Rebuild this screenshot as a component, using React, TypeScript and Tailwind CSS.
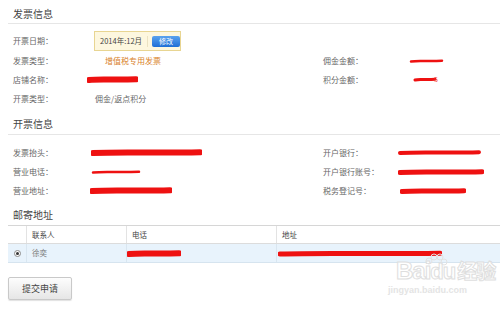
import { FC, ReactNode } from "react";

const Scribble: FC<{ w: number; h: number; t: number; dx?: number }> = ({ w, h, t, dx = 0 }) => {
  const y = h / 2 + 2;
  return (
    <svg width={w + 4} height={h + 4} className="block shrink-0" style={{ marginLeft: dx }}>
      <path
        d={`M2 ${y + 0.5} C ${w * 0.3} ${y - 0.8}, ${w * 0.6} ${y + 0.8}, ${w + 2} ${y - 0.3}`}
        stroke="#ee1111"
        strokeWidth={t}
        strokeLinecap="round"
        fill="none"
      />
    </svg>
  );
};

const Label: FC<{ children: ReactNode }> = ({ children }) => (
  <div className="text-[8px] text-[#666] whitespace-nowrap">{children}</div>
);

const App: FC = () => {
  return (
    <div className="relative w-[500px] h-[311px] overflow-hidden bg-white font-['Noto_Sans_CJK_SC','Noto_Sans',sans-serif]">
      <div className="h-[24px] border-b border-[#e6e6e6] ml-[8px] pl-[5px] pt-[7px] text-[10px] leading-[14px] text-[#444]">
        发票信息
      </div>

      <div className="mt-[7px] pl-[13px] grid grid-cols-[81px_229px_87px_1fr]">
        <div className="h-[20px] flex items-center"><Label>开票日期：</Label></div>
        <div className="h-[20px] flex items-center">
          <div className="w-[87px] h-[20px] shrink-0 flex items-center bg-[#fdf7df] border border-[#e8d592] pl-[5px] whitespace-nowrap">
            <span className="text-[7.5px] text-[#444]">2014年:12月</span>
            <span className="ml-[5px] w-px h-[11px] bg-[#ebe2c2]" />
            <span className="ml-[4px] w-[29px] h-[11px] rounded-[2px] bg-gradient-to-b from-[#5aa2ee] to-[#1d6ed6] text-white text-[7px] leading-[11px] text-center">
              修改
            </span>
          </div>
        </div>
        <div className="h-[20px]" />
        <div className="h-[20px]" />

        <div className="h-[19px] flex items-center"><Label>发票类型：</Label></div>
        <div className="h-[19px] flex items-center pl-[11px] text-[8px] text-[#d9822b]">增值税专用发票</div>
        <div className="h-[19px] flex items-center"><Label>佣金金额：</Label></div>
        <div className="h-[19px] flex items-center"><Scribble w={31} h={2} t={2.5} dx={-1} /></div>

        <div className="h-[19px] flex items-center"><Label>店铺名称：</Label></div>
        <div className="h-[19px] flex items-center"><Scribble w={47} h={5} t={6} dx={-7} /></div>
        <div className="h-[19px] flex items-center"><Label>积分金额：</Label></div>
        <div className="h-[19px] flex items-center">
          <Scribble w={20} h={3} t={3} dx={3} />
          <span className="text-[7px] text-[#e33] -ml-[3px]">5</span>
        </div>

        <div className="h-[19px] flex items-center"><Label>开票类型：</Label></div>
        <div className="h-[19px] flex items-center pl-[1px] text-[8px] text-[#666]">佣金/返点积分</div>
        <div className="h-[19px]" />
        <div className="h-[19px]" />
      </div>

      <div className="mt-[2px] h-[25px] border-b border-[#e6e6e6] ml-[8px] pl-[5px] pt-[7px] text-[10px] leading-[14px] text-[#444]">
        开票信息
      </div>

      <div className="mt-[8px] pl-[13px] grid grid-cols-[81px_229px_87px_1fr]">
        <div className="h-[19px] flex items-center"><Label>发票抬头：</Label></div>
        <div className="h-[19px] flex items-center"><Scribble w={107} h={5} t={6} dx={-3} /></div>
        <div className="h-[19px] flex items-center"><Label>开户银行：</Label></div>
        <div className="h-[19px] flex items-center"><Scribble w={79} h={3} t={4} dx={-12} /></div>

        <div className="h-[19px] flex items-center"><Label>营业电话：</Label></div>
        <div className="h-[19px] flex items-center"><Scribble w={46} h={2} t={2.5} dx={-3} /></div>
        <div className="h-[19px] flex items-center"><Label>开户银行账号：</Label></div>
        <div className="h-[19px] flex items-center"><Scribble w={82} h={4} t={5} dx={-12} /></div>

        <div className="h-[19px] flex items-center"><Label>营业地址：</Label></div>
        <div className="h-[19px] flex items-center"><Scribble w={78} h={5} t={6} dx={-4} /></div>
        <div className="h-[19px] flex items-center"><Label>税务登记号：</Label></div>
        <div className="h-[19px] flex items-center"><Scribble w={62} h={4} t={5} dx={-10} /></div>
      </div>

      <div className="h-[25px] ml-[8px] pl-[5px] pt-[8px] text-[10px] leading-[14px] text-[#444]">邮寄地址</div>

      <div className="ml-[8px] border-t border-[#d6d6d6]">
        <div className="h-[18px] flex border-b border-[#dcdcdc] text-[7.5px] text-[#444]">
          <div className="w-[19px] border-r border-[#e3e3e3]" />
          <div className="w-[100px] border-r border-[#e3e3e3] pl-[5px] flex items-center">联系人</div>
          <div className="w-[150px] border-r border-[#e3e3e3] pl-[5px] flex items-center">电话</div>
          <div className="flex-1 pl-[5px] flex items-center">地址</div>
        </div>
        <div className="h-[19px] flex bg-[#e8f3fc] border-b border-[#d6e4ef] text-[7.5px] text-[#777]">
          <div className="w-[19px] border-r border-[#d9e6f0] flex items-center justify-center">
            <span className="w-[7px] h-[7px] rounded-full border border-[#8a8a8a] bg-white flex items-center justify-center">
              <span className="w-[3px] h-[3px] rounded-full bg-[#333]" />
            </span>
          </div>
          <div className="w-[100px] border-r border-[#d9e6f0] pl-[5px] flex items-center">徐奕</div>
          <div className="w-[150px] border-r border-[#d9e6f0] flex items-center"><Scribble w={50} h={5} t={6} /></div>
          <div className="flex-1 flex items-center"><Scribble w={160} h={5} t={5} dx={1} /></div>
        </div>
      </div>

      <div className="mt-[14px] ml-[8px] w-[64px] h-[23px] border border-[#c9c9c9] rounded-[2px] bg-gradient-to-b from-[#fdfdfd] to-[#e6e6e6] shadow-[0_1px_1px_rgba(0,0,0,0.12)] flex items-center justify-center text-[9px] text-[#444]">
        提交申请
      </div>

      <div className="absolute left-[396px] top-[258px] pointer-events-none">
        <svg width="24" height="14" className="absolute left-[28px] -top-[5px]">
          <circle cx="5" cy="8" r="3" fill="none" stroke="#e2e2e2" strokeWidth="1" />
          <circle cx="10" cy="4" r="3" fill="none" stroke="#e2e2e2" strokeWidth="1" />
          <circle cx="16" cy="4" r="3" fill="none" stroke="#e2e2e2" strokeWidth="1" />
          <circle cx="20" cy="9" r="3" fill="none" stroke="#e2e2e2" strokeWidth="1" />
        </svg>
        <div className="font-['Liberation_Sans','Noto_Sans_CJK_SC',sans-serif] text-[24px] leading-[26px] font-bold text-white [-webkit-text-stroke:1px_#dedede] tracking-[-1px]">
          Bai<span className="text-[22px]">du</span><span className="text-[20px] ml-[2px]">经验</span>
        </div>
        <div className="font-['Liberation_Sans',sans-serif] text-[9px] leading-[10px] text-[#e4e4e4] font-bold ml-[-8px]">
          jingyan.baidu.com
        </div>
      </div>
    </div>
  );
};

export default App;
